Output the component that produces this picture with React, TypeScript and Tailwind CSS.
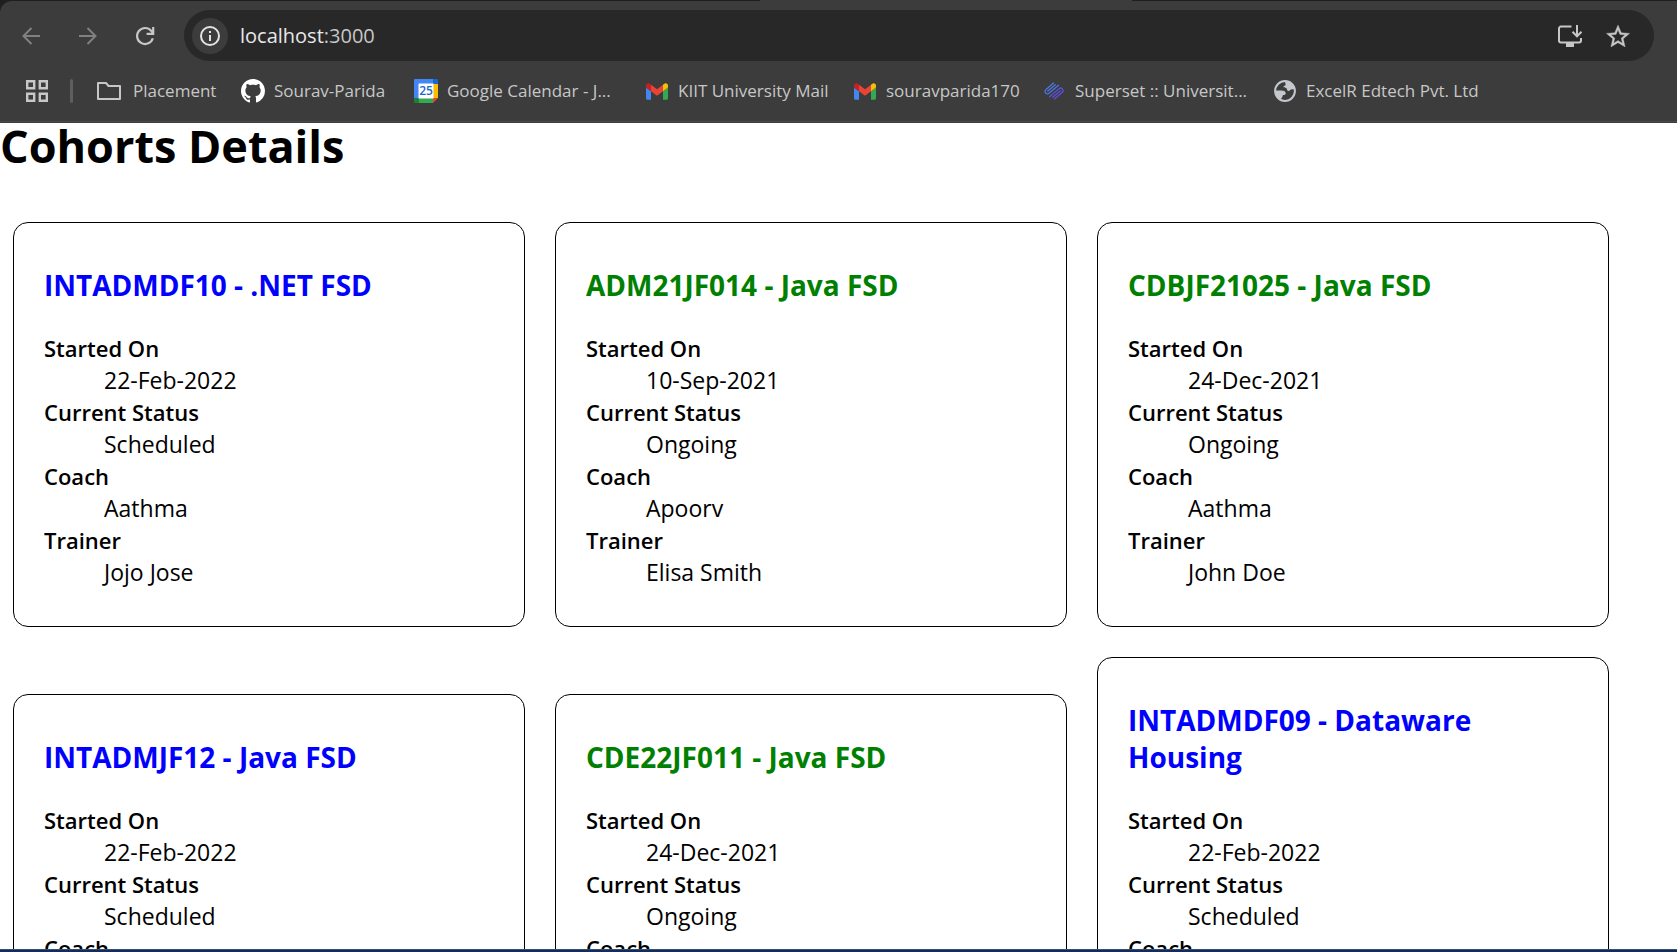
import type { ReactNode } from "react";

type Cohort = {
  title: string;
  startedOn: string;
  status: string;
  coach: string;
  trainer: string;
};

const cohorts: Cohort[] = [
  { title: "INTADMDF10 - .NET FSD", startedOn: "22-Feb-2022", status: "Scheduled", coach: "Aathma", trainer: "Jojo Jose" },
  { title: "ADM21JF014 - Java FSD", startedOn: "10-Sep-2021", status: "Ongoing", coach: "Apoorv", trainer: "Elisa Smith" },
  { title: "CDBJF21025 - Java FSD", startedOn: "24-Dec-2021", status: "Ongoing", coach: "Aathma", trainer: "John Doe" },
  { title: "INTADMJF12 - Java FSD", startedOn: "22-Feb-2022", status: "Scheduled", coach: "Aathma", trainer: "Jojo Jose" },
  { title: "CDE22JF011 - Java FSD", startedOn: "24-Dec-2021", status: "Ongoing", coach: "Apoorv", trainer: "Elisa Smith" },
  { title: "INTADMDF09 - Dataware Housing", startedOn: "22-Feb-2022", status: "Scheduled", coach: "Aathma", trainer: "John Doe" },
];

function CohortCard({ cohort }: { cohort: Cohort }) {
  const rows: [string, string][] = [
    ["Started On", cohort.startedOn],
    ["Current Status", cohort.status],
    ["Coach", cohort.coach],
    ["Trainer", cohort.trainer],
  ];
  return (
    <article className="w-[512px] rounded-[15px] border border-black px-[30px] pt-[44px] pb-[38px]">
      <h3
        className={`text-[28px] leading-[37px] font-bold ${
          cohort.status === "Ongoing" ? "text-[#008000]" : "text-[#0000ff]"
        }`}
      >
        {cohort.title}
      </h3>
      <dl className="mt-[28px] leading-[32px]">
        {rows.map(([term, value]) => (
          <div key={term}>
            <dt className="text-[22px] leading-[32px] font-semibold">{term}</dt>
            <dd className="ml-[60px] text-[23px] leading-[32px]">{value}</dd>
          </div>
        ))}
      </dl>
    </article>
  );
}

function GithubIcon() {
  return (
    <svg viewBox="0 0 16 16" className="size-6" fill="#fff" aria-hidden="true">
      <path d="M8 0C3.58 0 0 3.58 0 8c0 3.54 2.29 6.53 5.47 7.59.4.07.55-.17.55-.38 0-.19-.01-.82-.01-1.49-2.01.37-2.53-.49-2.69-.94-.09-.23-.48-.94-.82-1.13-.28-.15-.68-.52-.01-.53.63-.01 1.08.58 1.23.82.72 1.21 1.87.87 2.33.66.07-.52.28-.87.51-1.07-1.78-.2-3.64-.89-3.64-3.95 0-.87.31-1.59.82-2.15-.08-.2-.36-1.02.08-2.12 0 0 .67-.21 2.2.82.64-.18 1.32-.27 2-.27s1.36.09 2 .27c1.53-1.04 2.2-.82 2.2-.82.44 1.1.16 1.92.08 2.12.51.56.82 1.27.82 2.15 0 3.07-1.87 3.75-3.65 3.95.29.25.54.73.54 1.48 0 1.07-.01 1.93-.01 2.2 0 .21.15.46.55.38A8.01 8.01 0 0 0 16 8c0-4.42-3.58-8-8-8z" />
    </svg>
  );
}

function CalendarIcon() {
  return (
    <span className="relative flex size-6 items-center justify-center">
      <svg viewBox="0 0 24 24" className="absolute inset-0 size-6" aria-hidden="true">
        <path d="M1 0H19v5H5v14H0V1a1 1 0 0 1 1-1z" fill="#4285f4" />
        <path d="M19 0h4a1 1 0 0 1 1 1V5h-5z" fill="#1967d2" />
        <path d="M19 5h5v14h-5z" fill="#fbbc04" />
        <path d="M0 19h5v5H1a1 1 0 0 1-1-1z" fill="#188038" />
        <path d="M5 19h14v5H5z" fill="#34a853" />
        <path d="M19 19h5l-5 5z" fill="#ea4335" />
        <path d="M4.500 4.500h15v15h-15z" fill="#fff" />
      </svg>
      <span className="relative text-[12px] leading-none font-semibold text-[#1967d2]">25</span>
    </span>
  );
}

function GmailIcon() {
  return (
    <svg viewBox="52 42 88 66" className="h-[17px] w-[22px]" aria-hidden="true">
      <path fill="#4285f4" d="M58 108h14V74L52 59v43c0 3.320 2.690 6 6 6" />
      <path fill="#34a853" d="M120 108h14c3.320 0 6-2.690 6-6V59l-20 15" />
      <path fill="#fbbc04" d="M120 48v26l20-15v-8c0-7.420-8.470-11.650-14.400-7.200" />
      <path fill="#ea4335" d="M72 74V48l24 18 24-18v26L96 92" />
      <path fill="#c5221f" d="M52 51v8l20 15V48l-5.600-4.200c-5.940-4.450-14.400-.22-14.400 7.200" />
    </svg>
  );
}

function SupersetIcon() {
  return (
    <svg viewBox="0 0 22 20" className="h-5 w-[22px]" fill="none" strokeWidth="1.300" strokeLinecap="round" aria-hidden="true">
      <path d="M10.500 2 3 8.400a2.450 2.450 0 0 0 3 3.900L15.500 4.200" stroke="#4a78e0" />
      <path d="M12.300 3.700 4.800 10.100" stroke="#4a78e0" />
      <path d="M11.500 18 19 11.600a2.450 2.450 0 0 0-3-3.900L6.500 15.800" stroke="#5b4fe0" />
      <path d="M9.700 16.300 17.200 9.900" stroke="#5b4fe0" />
    </svg>
  );
}

function GlobeIcon() {
  return (
    <svg viewBox="0 0 22 22" className="size-[22px]" aria-hidden="true">
      <circle cx="11" cy="11" r="9.900" fill="none" stroke="#c4c7cc" strokeWidth="2" />
      <path
        d="M11.500 1.500c-1 1.500.2 2 .2 3.200 0 1-2.200.8-2.200 2 0 1 2.800.6 3.300 2 .3 1 .4 2.200 1.800 2.200 1.500 0 1.800-1.700 3.400-1.700H21C20.800 5 17 1.200 11.500 1.500zM1.500 10.500h6.200c1.800 0 4 .7 4 2.700 0 1.500-1.300 1.600-2.400 1.900-1.200.3-.4 2-1.500 2.600-.8.400-.6 1.600-.3 2.500C4 19 1 15 1.500 10.500z"
        fill="#c4c7cc"
      />
    </svg>
  );
}

function FolderIcon() {
  return (
    <svg viewBox="0 0 24 18" className="h-[18px] w-6" fill="none" stroke="#c7c7c7" strokeWidth="2" strokeLinejoin="round" aria-hidden="true">
      <path d="M1 1h8l2.500 3H23v13H1z" />
    </svg>
  );
}

function Bookmark({ icon, label, className }: { icon: ReactNode; label: string; className: string }) {
  return (
    <a href="#" className={`flex shrink-0 items-center text-[17px] leading-6 whitespace-nowrap text-[#c7c7c7] ${className}`}>
      {icon}
      {label}
    </a>
  );
}

function BrowserBar() {
  return (
    <header className="shrink-0 bg-[#1f1f1f]">
      <div className="ml-[760px] h-px w-[372px] bg-[#3c3c3c]" />
      <div className="rounded-tl-xl bg-[#3c3c3c] pb-px">
        <div className="flex items-center pt-[9px] pr-[23px] pl-[22px]">
          <button type="button" aria-label="Back">
            <svg viewBox="0 0 18 18" className="size-[18px]" fill="none" stroke="#808080" strokeWidth="2" aria-hidden="true">
              <path d="M18 9H1.500M9.500 1 1.500 9l8 8" />
            </svg>
          </button>
          <button type="button" aria-label="Forward" className="ml-[39px]">
            <svg viewBox="0 0 18 18" className="size-[18px]" fill="none" stroke="#808080" strokeWidth="2" aria-hidden="true">
              <path d="M0 9h16.500M8.500 1l8 8-8 8" />
            </svg>
          </button>
          <button type="button" aria-label="Reload" className="ml-[38px]">
            <svg viewBox="0 0 20 20" className="size-5" fill="none" stroke="#c7c7c7" strokeWidth="2.200" aria-hidden="true">
              <path d="M17.800 12.200a8 8 0 1 1-1.600-7.400L18 7M18.200 1v6.800h-6.600" />
            </svg>
          </button>
          <div className="ml-[29px] flex h-[51px] flex-1 items-center rounded-full bg-[#282828] pr-6 pl-2">
            <button type="button" aria-label="Site information" className="flex size-9 shrink-0 items-center justify-center rounded-full bg-[#3c3c3c]">
              <svg viewBox="0 0 20 20" className="size-5" fill="none" stroke="#e3e3e3" strokeWidth="2" aria-hidden="true">
                <circle cx="10" cy="10" r="9" />
                <path d="M10 9v6M10 5v2" />
              </svg>
            </button>
            <div className="ml-3 flex-1 text-[20px] leading-7 text-[#c7c7c7]">
              <span className="text-[#e8e8e8]">localhost</span>:3000
            </div>
            <button type="button" aria-label="Install app">
              <svg viewBox="0 0 24 22" className="h-[22px] w-6" fill="none" stroke="#c7c7c7" strokeWidth="2" aria-hidden="true">
                <path d="M13.500 1.500H3a2 2 0 0 0-2 2v12a2 2 0 0 0 2 2h18a2 2 0 0 0 2-2V13" />
                <path d="M19 0v11M14.500 6.800 19 11.300l4.500-4.500" />
                <path d="M8 18h8v4H8z" fill="#c7c7c7" stroke="none" />
              </svg>
            </button>
            <button type="button" aria-label="Bookmark this page" className="ml-6">
              <svg viewBox="2 2 20 19" className="h-[22px] w-6" fill="#c7c7c7" stroke="#c7c7c7" strokeWidth="0.300" aria-hidden="true">
                <path d="M22 9.240l-7.190-.62L12 2 9.190 8.630 2 9.240l5.460 4.730L5.820 21 12 17.270 18.180 21l-1.630-7.030L22 9.240zM12 15.400l-3.760 2.270 1-4.280-3.320-2.880 4.380-.38L12 6.100l1.710 4.040 4.380.38-3.320 2.880 1 4.280L12 15.400z" />
              </svg>
            </button>
          </div>
        </div>
        <nav aria-label="Bookmarks" className="flex h-[61px] items-center border-b border-[#4a4a4a] pl-[26px]">
          <button type="button" aria-label="All apps">
            <svg viewBox="0 0 22 22" className="size-[22px]" fill="none" stroke="#c7c7c7" strokeWidth="2.400" aria-hidden="true">
              <path d="M1.200 1.200h7v7h-7zM13.800 1.200h7v7h-7zM1.200 13.800h7v7h-7zM13.800 13.800h7v7h-7z" />
            </svg>
          </button>
          <span className="mr-6 ml-[22px] h-6 w-[3px] rounded-full bg-[#5e5e5e]" />
          <Bookmark icon={<FolderIcon />} label="Placement" className="w-[144px] gap-3" />
          <Bookmark icon={<GithubIcon />} label="Sourav-Parida" className="w-[173px] gap-[9px]" />
          <Bookmark icon={<CalendarIcon />} label="Google Calendar - J..." className="w-[232px] gap-[9px]" />
          <Bookmark icon={<GmailIcon />} label="KIIT University Mail" className="w-[208px] gap-[10px]" />
          <Bookmark icon={<GmailIcon />} label="souravparida170" className="w-[189px] gap-[10px]" />
          <Bookmark icon={<SupersetIcon />} label="Superset :: Universit..." className="w-[231px] gap-[10px]" />
          <Bookmark icon={<GlobeIcon />} label="ExcelR Edtech Pvt. Ltd" className="gap-[10px]" />
        </nav>
      </div>
    </header>
  );
}

export default function App() {
  return (
    <div className="flex h-screen flex-col overflow-hidden bg-white font-['Open_Sans','Noto_Sans',sans-serif] text-black">
      <BrowserBar />
      <main className="min-h-0 flex-1 overflow-hidden">
        <h1 className="text-[45px] leading-[46px] font-bold">Cohorts Details</h1>
        <section className="flex flex-wrap items-end gap-[30px] px-[13px] pt-[53px]">
          {cohorts.map((cohort) => (
            <CohortCard key={cohort.title} cohort={cohort} />
          ))}
        </section>
      </main>
      <footer className="h-[3px] shrink-0 border-t border-[#34506f] bg-[#142c5c]" />
    </div>
  );
}
